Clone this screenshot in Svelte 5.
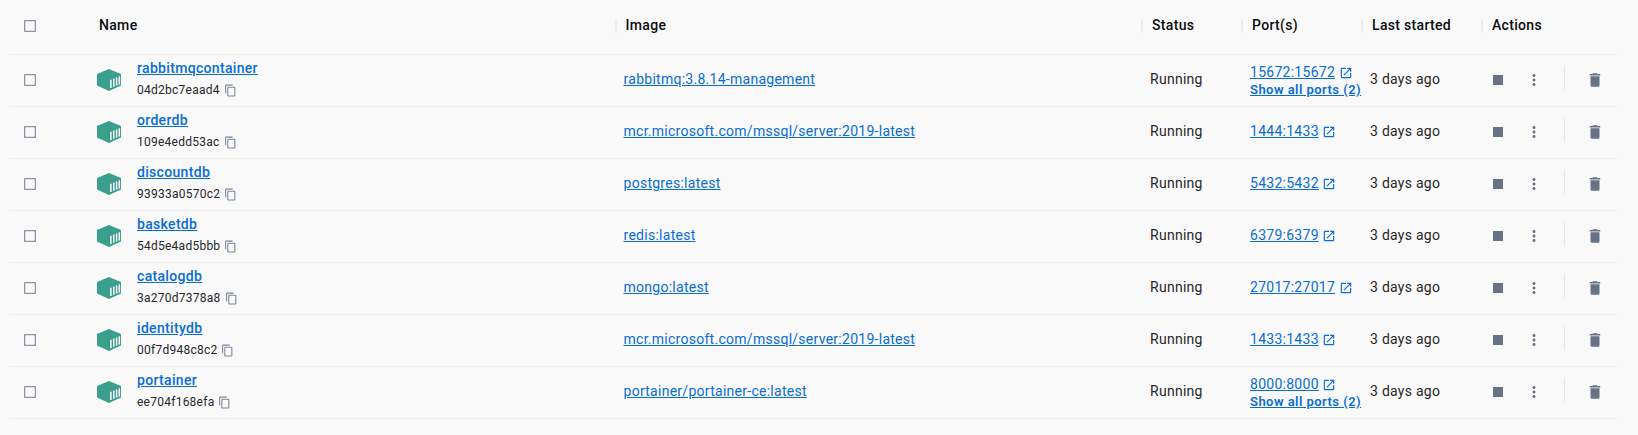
<script>
  const containers = [
    { name: 'rabbitmqcontainer', id: '04d2bc7eaad4', image: 'rabbitmq:3.8.14-management', port: '15672:15672', more: 2 },
    { name: 'orderdb', id: '109e4edd53ac', image: 'mcr.microsoft.com/mssql/server:2019-latest', port: '1444:1433' },
    { name: 'discountdb', id: '93933a0570c2', image: 'postgres:latest', port: '5432:5432' },
    { name: 'basketdb', id: '54d5e4ad5bbb', image: 'redis:latest', port: '6379:6379' },
    { name: 'catalogdb', id: '3a270d7378a8', image: 'mongo:latest', port: '27017:27017' },
    { name: 'identitydb', id: '00f7d948c8c2', image: 'mcr.microsoft.com/mssql/server:2019-latest', port: '1433:1433' },
    { name: 'portainer', id: 'ee704f168efa', image: 'portainer/portainer-ce:latest', port: '8000:8000', more: 2 }
  ];
  const headings = ['Name', 'Image', 'Status', 'Port(s)', 'Last started', 'Actions'];
</script>

{#snippet checkbox()}
  <div class="select">
    <svg width="12" height="12" viewBox="0 0 12 12">
      <rect x=".6" y=".6" width="10.8" height="10.8" rx=".6" fill="none" stroke="#8993a5" stroke-width="1.300" />
    </svg>
  </div>
{/snippet}

<div class="table">
  <div class="row header">
    {@render checkbox()}
    {#each headings as heading, i}
      <div class="heading" class:ruled={i > 0}><span>{heading}</span></div>
    {/each}
  </div>
  {#each containers as c}
    <div class="row">
      {@render checkbox()}
      <div class="cell name">
        <svg class="cube" width="24" height="22" viewBox="0 0 24 22">
          <path fill="#3a9f8c" d="M12 0 24 5V16.500L12 22 0 16.500V5Z" />
          <path fill="none" stroke="#f9f9f9" stroke-width="1.500" d="M13.900 10.800V18.900M16.800 9.600V17.700M19.600 8.400V16.500M22.300 7.300V15.400" />
        </svg>
        <div class="identity">
          <a class="title" href="#{c.name}">{c.name}</a>
          <div class="id">
            <span>{c.id}</span>
            <svg width="13" height="13" viewBox="0 0 24 24" fill="#7b879b">
              <path d="M16 1H4c-1.100 0-2 .9-2 2v14h2V3h12V1zm3 4H8c-1.100 0-2 .9-2 2v14c0 1.100.9 2 2 2h11c1.100 0 2-.9 2-2V7c0-1.100-.9-2-2-2zm0 16H8V7h11v14z" />
            </svg>
          </div>
        </div>
      </div>
      <div class="cell"><a href="#{c.image}">{c.image}</a></div>
      <div class="cell">Running</div>
      <div class="cell" class:stacked={c.more}>
        <div class="port">
          <a href="#{c.port}">{c.port}</a>
          <svg width="14" height="14" viewBox="0 0 24 24" fill="#086dd7">
            <path d="M19 19H5V5h7V3H5c-1.110 0-2 .9-2 2v14c0 1.100.89 2 2 2h14c1.100 0 2-.9 2-2v-7h-2v7zM14 3v2h3.590l-9.830 9.830 1.410 1.410L19 6.410V10h2V3h-7z" />
          </svg>
        </div>
        {#if c.more}<a class="more" href="#ports">Show all ports ({c.more})</a>{/if}
      </div>
      <div class="cell">3 days ago</div>
      <div class="actions">
        <svg class="stop" width="20" height="20" viewBox="0 0 24 24"><path d="M6 6h12v12H6z" /></svg>
        <svg class="menu" width="18" height="18" viewBox="0 0 24 24">
          <path d="M12 8c1.100 0 2-.9 2-2s-.9-2-2-2-2 .9-2 2 .9 2 2 2zm0 2c-1.100 0-2 .9-2 2s.9 2 2 2 2-.9 2-2-.9-2-2-2zm0 6c-1.100 0-2 .9-2 2s.9 2 2 2 2-.9 2-2-.9-2-2-2z" />
        </svg>
        <span class="divider"></span>
        <svg class="trash" width="18" height="18" viewBox="0 0 24 24">
          <path d="M6 19c0 1.100.9 2 2 2h8c1.100 0 2-.9 2-2V7H6v12zM19 4h-3.500l-1-1h-5l-1 1H5v2h14V4z" />
        </svg>
      </div>
    </div>
  {/each}
</div>

<style>
  :global(body) {
    background: #f9f9f9;
  }
  .table {
    box-sizing: border-box;
    height: 435px;
    padding: 0 21px 0 9px;
    overflow: hidden;
    font: 400 14px/20px Roboto, sans-serif;
    letter-spacing: 0.27px;
    color: #27272a;
  }
  .row {
    box-sizing: border-box;
    display: grid;
    grid-template-columns: 80px 1fr 1fr 100px 120px 120px 135px;
    align-items: center;
    height: 52px;
    padding-bottom: 1px;
    border-bottom: 1px solid #ededee;
  }
  .header {
    height: 55px;
    padding-bottom: 2px;
  }
  .select {
    padding-left: 15px;
    display: flex;
  }
  .heading {
    display: flex;
    align-items: center;
    padding-left: 10px;
    font-weight: 500;
    letter-spacing: 0.32px;
    color: #0c0d10;
  }
  .heading span {
    padding-bottom: 2px;
  }
  .ruled {
    padding-left: 0;
  }
  .ruled::before {
    content: '';
    width: 2px;
    height: 14px;
    margin: 0 9px 0 -1px;
    background: #ededee;
  }
  .cell {
    padding: 0 0 2px 8px;
    white-space: nowrap;
  }
  a {
    color: #086dd7;
    text-decoration: underline;
  }
  .name {
    display: flex;
    align-items: center;
    gap: 16px;
    padding-bottom: 0;
  }
  .cube {
    flex: none;
  }
  .identity {
    display: flex;
    flex-direction: column;
    padding-bottom: 2px;
  }
  .title {
    font-weight: 500;
    line-height: 22px;
    letter-spacing: 0.32px;
  }
  .id {
    display: flex;
    align-items: center;
    gap: 4px;
    font-size: 12px;
    line-height: 22px;
    letter-spacing: 0.25px;
  }
  .port {
    display: flex;
    align-items: center;
    gap: 3.500px;
    line-height: 18px;
  }
  .port svg {
    margin-top: 1px;
  }
  .stacked {
    padding: 2px 0 0 8px;
  }
  .more {
    display: block;
    font-size: 13px;
    font-weight: 600;
    line-height: 18px;
    letter-spacing: 0.46px;
  }
  .actions {
    display: flex;
    align-items: center;
    fill: #677285;
  }
  .stop {
    margin-left: 6px;
  }
  .menu {
    margin-left: 17px;
  }
  .divider {
    width: 1px;
    height: 24px;
    margin: -4px 21px 0 21px;
    background: #e6e7ea;
  }
</style>
